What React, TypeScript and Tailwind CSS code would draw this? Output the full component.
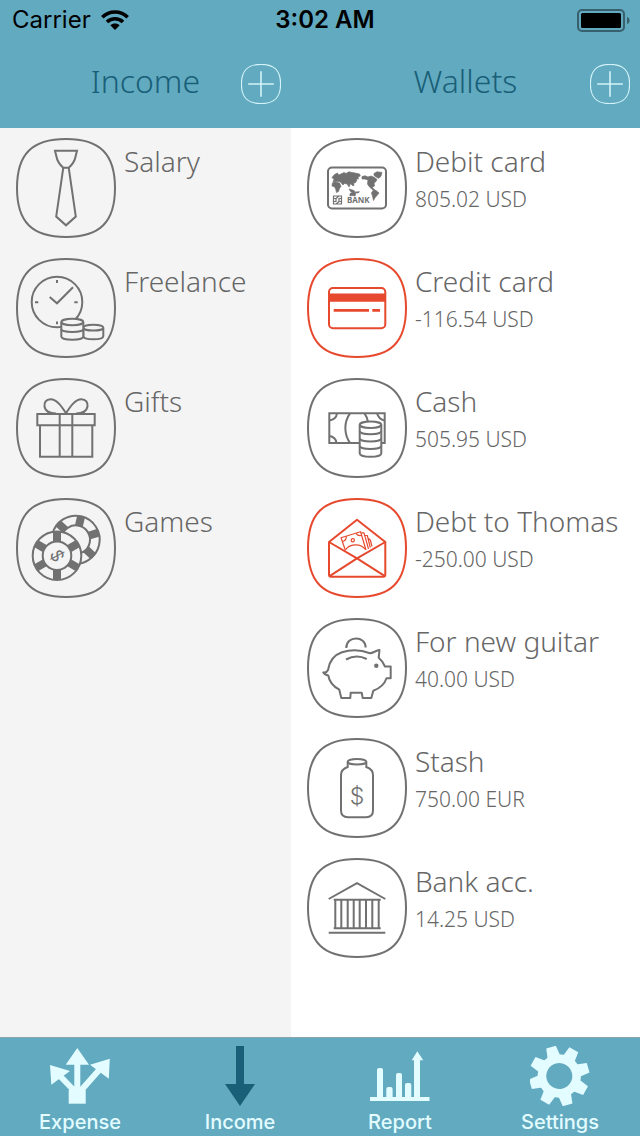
import { useState } from 'react';
import type { ReactNode } from 'react';

type TItem = {
  name: string;
  icon: ReactNode;
  amount?: string;
  negative?: boolean;
};

const FRAME = 'M50 1C84 1 99 16 99 50C99 84 84 99 50 99C16 99 1 84 1 50C1 16 16 1 50 1Z';
const SIXTHS = [0, 60, 120, 180, 240, 300];
const EIGHTHS = [0, 45, 90, 135, 180, 225, 270, 315];

const TieIcon = (
  <g>
    <path d="M39 12.7H61L59.7 18C58.8 23 56 27 52.7 29.7H47.3C44 27 41.2 23 40.3 18Z" />
    <path d="M47.3 29.7L40.2 78.5L50 87.3L59.8 78.5L52.7 29.7" />
  </g>
);

const FreelanceIcon = (
  <g>
    <circle cx="41" cy="44" r="25.3" />
    <path d="M33.7 39L41 45.3L57 29.3M41 22V25M41 63.5V66.3M19 44.3H22.3M58.3 44.3H61.7" />
    <path d="M67.3 69.7V78C67.3 82.4 87.3 82.4 87.3 78V69.7" fill="#f4f4f4" />
    <ellipse cx="77.3" cy="69.7" rx="10" ry="2.9" fill="#f4f4f4" />
    <path d="M45.3 64V78.5C45.3 82.8 67.3 82.8 67.3 78.5V64" fill="#f4f4f4" />
    <ellipse cx="56.3" cy="64" rx="11" ry="3.2" fill="#f4f4f4" />
    <path d="M45.3 71C45.3 75 67.3 75 67.3 71" />
  </g>
);

const GiftIcon = (
  <g>
    <path d="M21.3 36H78.7V47.3H21.3ZM24 47.3H76.3V78.7H24ZM43.7 36V78.7M56.3 36V78.7" />
    <path d="M50 35.3C46 29 41 21.2 34.5 21.2C30 21.2 28 24.5 28.5 28.5C29.3 33.5 34 35.5 40 35.5" />
    <path d="M50 35.3C54 29 59 21.2 65.5 21.2C70 21.2 72 24.5 71.5 28.5C70.7 33.5 66 35.5 60 35.5" />
  </g>
);

const ChipsIcon = (
  <g>
    <g transform="translate(59.7 41.7) rotate(13)">
      <circle r="24" />
      <circle r="14.3" />
      {SIXTHS.map((a) => (
        <rect key={a} x="-4" y="-24" width="8" height="9.7" fill="currentColor" stroke="none" transform={`rotate(${a})`} />
      ))}
    </g>
    <g transform="translate(41 57.7)">
      <circle r="24.3" fill="#f4f4f4" />
      <circle r="14.3" />
      {SIXTHS.map((a) => (
        <rect key={a} x="-4" y="-24.3" width="8" height="10" fill="currentColor" stroke="none" transform={`rotate(${a})`} />
      ))}
      <text
        transform="rotate(62)"
        y="6"
        textAnchor="middle"
        className="font-['Inter',sans-serif] text-[17px] font-normal"
        fill="currentColor"
        stroke="none"
      >
        $
      </text>
    </g>
  </g>
);

const DebitIcon = (
  <g>
    <rect x="21" y="29.5" width="58" height="41" rx="4" />
    <g fill="currentColor" strokeWidth="0.7">
      {/* Europe and Asia */}
      <path d="M25 39.5L27.5 36.5L30.5 35L31.5 37L34 36L37 34.5L39 35.5L42 33.8L45 34.5L48 35L52.5 36L53.3 38L51 38.8L51.5 41L50 40.5L49.5 43L48 45L46.5 44.7L47 47.5L45 47.3L43.5 45.5L42 49L40.3 46L37.5 45.5L36 47L33.5 44L31 43.3L28 43.8L26 43.5L27 41.5Z" />
      {/* Africa */}
      <path d="M25.5 44.8L28.5 44L32.5 45L34 48.3L32.5 50.5L31.5 53.5L29.5 54.5L28.7 51L27.5 48.8L25 48Z" />
      {/* Australia and the islands */}
      <path d="M42 51L47 52.5L48 54L52.5 53.8L51 55L44 54ZM43 55.5L46 54.3L48.8 55.5L48 58L45 57.5L43 58Z" />
      {/* Americas */}
      <path d="M55 38.5L58 37.8L61 39L64 38L67.5 39.5L70 41.5L68.5 44L67 45L67.5 48L65 49.5L67.5 51.5L69 53L66 52L62.5 49L60.5 46L61 42L58 41L55 41Z" />
      <path d="M67 35.5L70 33.8L75 34.5L74 38L72 40.3L70 39.5L67 37.5Z" />
      <path d="M65.8 52.8L69 52.5L72 55L69.5 58L67.8 60L66.5 62.5L65.5 58L64.5 55Z" />
    </g>
    <text x="40" y="64.7" className="text-[8px] font-bold" fill="currentColor" stroke="none">
      BANK
    </text>
    <path d="M26.5 58H34.5V66H26.5ZM26.5 60.5H29V63.5H26.5M34.5 60.5H32V63.5H34.5M29 66L32 63.5M29 60.5L32 58" strokeWidth="1.2" />
  </g>
);

const CreditIcon = (
  <g>
    <rect x="22" y="30" width="56.3" height="40.3" rx="4" />
    <path d="M21.7 35.5H78.3V43.7H21.7Z" fill="currentColor" stroke="none" />
    <path d="M26.7 52.3H62M65.3 52.3H73" strokeWidth="2.7" />
  </g>
);

const CashIcon = (
  <g>
    <path d="M22.3 35.3H77.7V65H22.3Z" />
    <path d="M30 35.3C29.5 39 26.5 41.8 22.3 42.5M22.3 58C26 58.5 29 61 29.5 65M70 35.3C71 39 74 41.8 77.7 42.5" />
    <path d="M43 35.3C36.8 44 36.8 56 43 65M57.5 35.3C59.5 38 60.5 41 61 44" />
    <path d="M52.7 46.7V75.3C52.7 80 74.3 80 74.3 75.3V46.7" fill="#ffffff" />
    <ellipse cx="63.5" cy="46.7" rx="10.8" ry="3.2" fill="#ffffff" />
    <path d="M52.7 53C52.7 57.3 74.3 57.3 74.3 53M52.7 60.3C52.7 64.6 74.3 64.6 74.3 60.3M52.7 67.8C52.7 72.1 74.3 72.1 74.3 67.8" />
  </g>
);

const DebtIcon = (
  <g strokeLinejoin="round">
    <path d="M22 44L50 21.7L78.3 44V76.5C78.3 78 77.5 78.7 76 78.7H24C22.7 78.7 22 78 22 76.5Z" />
    <path d="M22 44L50 60.3L78.3 44M23 77.8L50 60.3L77.5 77.8" />
    <g strokeWidth="1.2">
      <path d="M38.5 52.5L34 39.7L53.5 33.7L59 52" />
      <path d="M54.3 34.8H57L61.5 50.8M58 37.5H60.3L63.3 49.6M61 40.3L63.3 42L65 48.5" />
      <path d="M38.5 52C42 46 53 44.5 58.5 51.5M35.5 43.5C38 43 39.5 41.5 39.3 38.3M49 35.3C50.5 37.5 52.5 38 54.8 37.3" />
      <circle cx="45.8" cy="42.3" r="1.6" />
    </g>
  </g>
);

const PiggyIcon = (
  <g strokeLinejoin="round">
    <path d="M39.3 30C39.3 17.3 58.7 17.3 58.7 29.5" />
    <path d="M16.3 54.3C18 55 20 54 21 52C22.5 42 28.5 36.5 35 34.3C43 31.8 54 31.8 63 35.3C66 35 69 32.5 72.5 32L71.7 39.7C74.5 42 76.5 45 78 48.5H83.7V60.3H79.5C77.5 66.5 73 70.3 66.3 72.7L64.3 80H55.7L54.7 74.7H43.7L43.3 80H34.3L32.3 71.7C26.5 68.5 22.3 64 21.3 57.5C19 57 17 56 16.3 54.3Z" />
    <path d="M39 41.5C45.5 38 53.5 38 59.7 41" />
    <circle cx="69.3" cy="47.7" r="2.2" fill="currentColor" stroke="none" />
  </g>
);

const JarIcon = (
  <g>
    <ellipse cx="50" cy="23.7" rx="9.3" ry="2.8" />
    <path d="M40.7 23.7V29C36.5 30.5 34 33 34 37V72.5C34 77 36.5 79.2 41 79.2H59C63.5 79.2 66 77 66 72.5V37C66 33 63.5 30.5 59.3 29V23.7" />
    <text
      x="50"
      y="65.5"
      textAnchor="middle"
      className="font-['Inter',sans-serif] text-[23px] font-light"
      fill="currentColor"
      stroke="none"
    >
      $
    </text>
  </g>
);

const BankIcon = (
  <g>
    <path d="M21.7 41L50 25.2L78.3 41M26.7 41.7H73.7M26.7 70.3H73.7M21.7 74.7H78.3" />
    <path d="M28.3 41.7V70M34.3 41.7V70M40.7 41.7V70M46.7 41.7V70M52.7 41.7V70M59 41.7V70M65.3 41.7V70M71.7 41.7V70" />
  </g>
);

const ExpenseTabIcon = (
  <g>
    <path d="M27.3 2L39 18.7H15.7ZM0 19L20 25L1.3 38.7ZM59.8 12.7L40 18.7L58.8 32.7Z" />
    <path d="M18.7 44H35.7V57.7H18.7Z" />
    <path d="M27.3 17V46M10 30L24.5 45M50 23L31 44.5" stroke="currentColor" strokeWidth="6" fill="none" />
  </g>
);

const IncomeTabIcon = <path d="M26 0H34V38H45L30 60L15 38H26Z" />;

const ReportTabIcon = (
  <g>
    <path d="M0 51H59.5V55H0Z" />
    <rect x="7" y="22" width="6" height="32" rx="2" />
    <rect x="16.3" y="41" width="6.3" height="13" rx="2" />
    <rect x="26" y="27" width="6" height="27" rx="2" />
    <rect x="35" y="37" width="6.3" height="17" rx="2" />
    <path d="M44 53V14.3H41.7L47.3 5.3L53.3 14.3H50V53Z" />
  </g>
);

const SettingsTabIcon = (
  <g transform="translate(29.3 30) rotate(-16)">
    <circle r="17.3" fill="none" stroke="currentColor" strokeWidth="8.6" />
    {EIGHTHS.map((a) => (
      <path key={a} d="M-6.5 -19.5L-5 -30H5L6.5 -19.5Z" transform={`rotate(${a})`} />
    ))}
  </g>
);

const incomes: TItem[] = [
  { name: 'Salary', icon: TieIcon },
  { name: 'Freelance', icon: FreelanceIcon },
  { name: 'Gifts', icon: GiftIcon },
  { name: 'Games', icon: ChipsIcon },
];

const wallets: TItem[] = [
  { name: 'Debit card', amount: '805.02 USD', icon: DebitIcon },
  { name: 'Credit card', amount: '-116.54 USD', icon: CreditIcon, negative: true },
  { name: 'Cash', amount: '505.95 USD', icon: CashIcon },
  { name: 'Debt to Thomas', amount: '-250.00 USD', icon: DebtIcon, negative: true },
  { name: 'For new guitar', amount: '40.00 USD', icon: PiggyIcon },
  { name: 'Stash', amount: '750.00 EUR', icon: JarIcon },
  { name: 'Bank acc.', amount: '14.25 USD', icon: BankIcon },
];

const tabs = [
  { name: 'Expense', icon: ExpenseTabIcon },
  { name: 'Income', icon: IncomeTabIcon },
  { name: 'Report', icon: ReportTabIcon },
  { name: 'Settings', icon: SettingsTabIcon },
];

const StatusBar = () => (
  <div className="grid h-10 grid-cols-[1fr_auto_1fr] items-center pl-3 pr-2.5 font-['Inter',sans-serif] text-[24px] leading-10 text-black">
    <div className="flex items-center gap-2.5">
      <span>Carrier</span>
      <svg viewBox="0 0 28 20" className="h-5 w-7" fill="none" stroke="currentColor" strokeWidth="3.6" aria-hidden="true">
        <path d="M1.3 7.2C8.3 0.2 19.7 0.2 26.7 7.2" />
        <path d="M6 12C10.4 7.7 17.6 7.7 22 12" />
        <path d="M14 20L9.3 15.3C12 12.9 16 12.9 18.7 15.3Z" fill="currentColor" stroke="none" />
      </svg>
    </div>
    <span className="pl-2 font-semibold">3:02 AM</span>
    <svg viewBox="0 0 53 24" className="h-6 w-[53px] justify-self-end" aria-hidden="true">
      <rect x="1" y="2" width="46" height="21" rx="4" fill="none" stroke="#38616d" strokeWidth="2" />
      <rect x="4" y="5" width="40" height="15" rx="1.5" />
      <path d="M50 9C53.5 10 53.5 15 50 16Z" fill="#38616d" />
    </svg>
  </div>
);

const ColumnTitle = ({ title }: { title: string }) => (
  <div className="grid grid-cols-[40px_1fr_40px] items-center px-2.5">
    <h2 className="col-start-2 pb-1.5 text-center text-[32px] font-light leading-10 text-[#195f78]">{title}</h2>
    <button type="button" aria-label={`Add to ${title}`} className="size-10 text-[#d3f3f8]">
      <svg viewBox="0 0 100 100" className="size-10" fill="none" stroke="currentColor" aria-hidden="true">
        <path d={FRAME} strokeWidth="3" />
        <path d="M18 50H82M50 18V82" strokeWidth="4" />
      </svg>
    </button>
  </div>
);

const ItemList = ({ items }: { items: TItem[] }) => (
  <ul className="flex flex-col gap-5 py-2.5 pl-4">
    {items.map((item) => (
      <li key={item.name}>
        <button type="button" className="flex w-full gap-2 text-left">
          <svg
            viewBox="0 0 100 100"
            className={item.negative ? 'size-[100px] shrink-0 text-[#e6492d]' : 'size-[100px] shrink-0 text-[#717171]'}
            fill="none"
            stroke="currentColor"
            strokeWidth="2"
            aria-hidden="true"
          >
            <path d={FRAME} />
            {item.icon}
          </svg>
          <span className="flex min-w-0 flex-col pt-[3px] font-light text-[#666666]">
            <span className="whitespace-nowrap text-[28px] leading-10">{item.name}</span>
            {item.amount && <span className="whitespace-nowrap text-[21px] leading-9">{item.amount}</span>}
          </span>
        </button>
      </li>
    ))}
  </ul>
);

export default function App() {
  const [activeTab, setActiveTab] = useState('Income');

  return (
    <div className="flex min-h-screen flex-col bg-white font-['Noto_Sans',sans-serif]">
      <header className="bg-[#62aac0]">
        <StatusBar />
        <div className="grid h-22 grid-cols-[5fr_6fr]">
          <ColumnTitle title="Income" />
          <ColumnTitle title="Wallets" />
        </div>
      </header>

      <main className="grid flex-1 grid-cols-[5fr_6fr]">
        <section aria-label="Income" className="bg-[#f4f4f4]">
          <ItemList items={incomes} />
        </section>
        <section aria-label="Wallets">
          <ItemList items={wallets} />
        </section>
      </main>

      <nav className="grid grid-cols-4 border-t border-[#8fa5ae] bg-[#62aac0] pb-0.5 pt-2">
        {tabs.map((tab) => (
          <button
            key={tab.name}
            type="button"
            onClick={() => setActiveTab(tab.name)}
            className="flex flex-col items-center gap-1 text-[#e3fcff]"
          >
            <svg
              viewBox="0 0 60 60"
              className={activeTab === tab.name ? 'size-15 text-[#195f78]' : 'size-15'}
              fill="currentColor"
              aria-hidden="true"
            >
              {tab.icon}
            </svg>
            <span className="font-['Inter',sans-serif] text-[20px] font-medium leading-6">{tab.name}</span>
          </button>
        ))}
      </nav>
    </div>
  );
}
